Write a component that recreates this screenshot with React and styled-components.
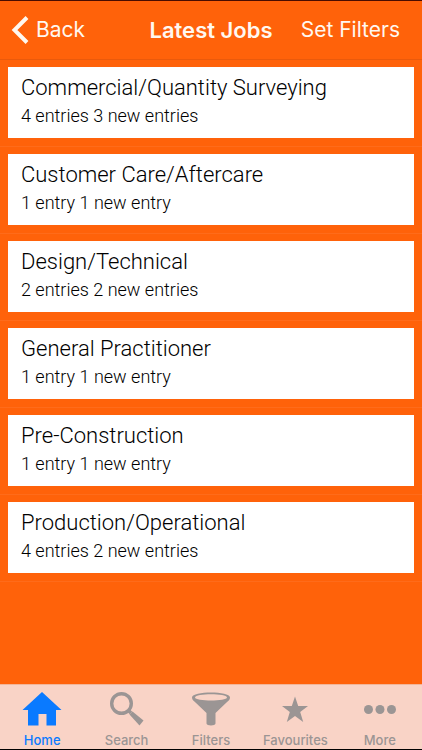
import React from "react";
import styled, { createGlobalStyle } from "styled-components";

const GlobalStyle = createGlobalStyle`
  *, *::before, *::after { box-sizing: border-box; }
  body { margin: 0; background: #ff620a; }
  button, a { font: inherit; }
`;

const Screen = styled.div`
  display: flex;
  flex-direction: column;
  min-height: 100vh;
  background: #ff620a;
  border-top: 1px solid #4a0c00;
  border-bottom: 1px solid #000;
  font-family: Inter, "Liberation Sans", sans-serif;
`;

const Header = styled.header`
  display: grid;
  grid-template-columns: 1fr auto 1fr;
  align-items: center;
  height: 59px;
  padding: 0 11px;
  border-bottom: 1px solid #ea5a0c;
  color: #fff8f0;
`;

const HeaderButton = styled.button`
  display: flex;
  align-items: center;
  gap: 7px;
  justify-self: ${({ $end }) => ($end ? "end" : "start")};
  padding: ${({ $end }) => ($end ? "0 11px 0 0" : "0")};
  border: 0;
  background: none;
  color: inherit;
  font-size: 21px;
  line-height: 28px;
  white-space: nowrap;
  cursor: pointer;
`;

const Title = styled.h1`
  margin: 0;
  font-size: 22px;
  font-weight: 600;
  line-height: 28px;
`;

const JobList = styled.ul`
  flex: 1;
  margin: 0;
  padding: 0;
  list-style: none;
`;

const JobRow = styled.li`
  padding: 7px 8px 8px;
  border-bottom: 1px solid #ff6b1a;
`;

const JobCard = styled.a`
  display: block;
  padding: 7px 13px 8px;
  background: #fff;
  color: #000;
  font-family: Roboto, "Liberation Sans", sans-serif;
  font-weight: 300;
  text-decoration: none;
`;

const JobName = styled.span`
  display: block;
  font-size: 22px;
  line-height: 28px;
`;

const JobCount = styled.span`
  display: block;
  font-size: 18px;
  line-height: 28px;
`;

const TabBar = styled.nav`
  display: grid;
  grid-template-columns: repeat(5, 1fr);
  height: 65px;
  background: #f9d3c6;
  border-top: 1px solid #f3b598;
`;

const Tab = styled.a`
  display: flex;
  flex-direction: column;
  align-items: center;
  padding-top: 4px;
  color: ${({ $active }) => ($active ? "#0a7aff" : "#9b9594")};
  font-size: 13px;
  font-weight: 500;
  line-height: 16px;
  text-decoration: none;

  svg { display: block; margin-bottom: 3px; }
`;

const TabIcon = ({ children }) => (
  <svg width="42" height="40" viewBox="0 0 42 40" fill="currentColor" aria-hidden="true">
    {children}
  </svg>
);

const jobs = [
  ["Commercial/Quantity Surveying", "4 entries 3 new entries"],
  ["Customer Care/Aftercare", "1 entry 1 new entry"],
  ["Design/Technical", "2 entries 2 new entries"],
  ["General Practitioner", "1 entry 1 new entry"],
  ["Pre-Construction", "1 entry 1 new entry"],
  ["Production/Operational", "4 entries 2 new entries"],
];

const tabs = [
  { label: "Home", icon: <path d="M21 3 L40.500 21 H35 V36.500 H25.500 V25 H17.500 V36.500 H7 V21 H1.500 Z" /> },
  {
    label: "Search",
    icon: (
      <>
        <circle cx="15.500" cy="14.500" r="9.800" fill="none" stroke="currentColor" strokeWidth="3.400" />
        <path d="M22 21 L25 24" stroke="currentColor" strokeWidth="3.500" />
        <path d="M26.500 22.500 L37.500 31.500 L33.500 36.500 L23.500 25.500 Z" />
      </>
    ),
  },
  {
    label: "Filters",
    icon: (
      <path
        fillRule="evenodd"
        d="M2 8.500 C2 1.800 40 1.800 40 8.500 C40 10.500 38.500 12 36.500 13.500 L25.500 24 V34.500 C25.500 37 16.500 37 16.500 34.500 V24 L5.500 13.500 C3.500 12 2 10.500 2 8.500 Z M5 8.500 C5 12.500 37 12.500 37 8.500 C37 4.300 5 4.300 5 8.500 Z"
      />
    ),
  },
  { label: "Favourites", icon: <path d="M21 7.500 L24.200 17 H34 L26.200 23 L29.200 33 L21 27 L12.800 33 L15.800 23 L8 17 H17.800 Z" /> },
  {
    label: "More",
    icon: (
      <>
        <circle cx="9.500" cy="20.500" r="4.500" />
        <circle cx="21" cy="20.500" r="4.500" />
        <circle cx="32.500" cy="20.500" r="4.500" />
      </>
    ),
  },
];

export default function App() {
  return (
    <>
      <GlobalStyle />
      <Screen>
        <Header>
          <HeaderButton type="button">
            <svg width="18" height="28" viewBox="0 0 18 28" fill="none" stroke="currentColor" strokeWidth="4" aria-hidden="true">
              <path d="M16 1.500 L3.500 14 L16 26.500" />
            </svg>
            Back
          </HeaderButton>
          <Title>Latest Jobs</Title>
          <HeaderButton type="button" $end>Set Filters</HeaderButton>
        </Header>
        <JobList>
          {jobs.map(([name, count]) => (
            <JobRow key={name}>
              <JobCard href="#">
                <JobName>{name}</JobName>
                <JobCount>{count}</JobCount>
              </JobCard>
            </JobRow>
          ))}
        </JobList>
        <TabBar aria-label="Main">
          {tabs.map(({ label, icon }, index) => (
            <Tab key={label} href="#" $active={index === 0} aria-current={index === 0 ? "page" : undefined}>
              <TabIcon>{icon}</TabIcon>
              {label}
            </Tab>
          ))}
        </TabBar>
      </Screen>
    </>
  );
}
